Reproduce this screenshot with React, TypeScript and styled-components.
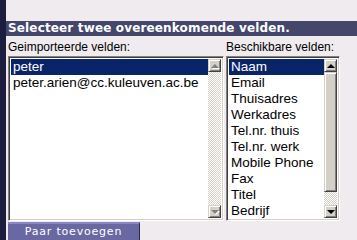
import styled, { createGlobalStyle } from "styled-components";

const GlobalStyle = createGlobalStyle`
    html, body {
        margin: 0;
        padding: 0;
        background: #efebef;
    }
`;

const imported = ["peter", "peter.arien@cc.kuleuven.ac.be"];
const available = [
    "Naam",
    "Email",
    "Thuisadres",
    "Werkadres",
    "Tel.nr. thuis",
    "Tel.nr. werk",
    "Mobile Phone",
    "Fax",
    "Titel",
    "Bedrijf",
];

export default function App() {
    return (
        <>
            <GlobalStyle />
            <Page>
                <SideStrip />
                <Content>
                    <Header>Selecteer twee overeenkomende velden.</Header>
                    <Columns>
                        <Column>
                            <Label>Geimporteerde velden:</Label>
                            <ListBox $width={216}>
                                <Items>
                                    {imported.map((item, i) => (
                                        <Item key={item} $selected={i === 0}>{item}</Item>
                                    ))}
                                </Items>
                                <ScrollBar>
                                    <ArrowButton>
                                        <Arrow $up $disabled />
                                    </ArrowButton>
                                    <Track />
                                    <ArrowButton>
                                        <Arrow $disabled />
                                    </ArrowButton>
                                </ScrollBar>
                            </ListBox>
                        </Column>
                        <Column>
                            <Label>Beschikbare velden:</Label>
                            <ListBox $width={114}>
                                <Items>
                                    {available.map((item, i) => (
                                        <Item key={item} $selected={i === 0}>{item}</Item>
                                    ))}
                                </Items>
                                <ScrollBar>
                                    <ArrowButton>
                                        <Arrow $up />
                                    </ArrowButton>
                                    <Thumb />
                                    <Track />
                                    <ArrowButton>
                                        <Arrow />
                                    </ArrowButton>
                                </ScrollBar>
                            </ListBox>
                        </Column>
                    </Columns>
                    <AddButton>Paar toevoegen</AddButton>
                </Content>
            </Page>
        </>
    );
}

const Page = styled.div`
    display: flex;
    width: 357px;
    height: 240px;
    overflow: hidden;
`;

const SideStrip = styled.div`
    width: 6px;
    flex-shrink: 0;
    background: #1d1d3d;
`;

const Content = styled.div`
    flex: 1;
    padding-top: 21px;
    display: flex;
    flex-direction: column;
`;

const Header = styled.div`
    height: 15px;
    line-height: 15px;
    background: #44466a;
    color: #fff;
    font-family: "DejaVu Sans", Verdana, sans-serif;
    font-weight: bold;
    font-size: 12px;
    letter-spacing: 0.15px;
    padding-left: 2px;
    white-space: nowrap;
`;

const Columns = styled.div`
    display: flex;
    gap: 2px;
    padding-left: 2px;
    margin-top: 4px;
`;

const Column = styled.div`
    display: flex;
    flex-direction: column;
`;

const Label = styled.div`
    font-family: "Liberation Sans", Arial, sans-serif;
    font-size: 12px;
    line-height: 14px;
    color: #000;
    height: 16px;
`;

const ListBox = styled.div<{ $width: number }>`
    width: ${p => p.$width}px;
    height: 165px;
    box-sizing: border-box;
    display: flex;
    background: #fff;
    border-top: 1px solid #808080;
    border-left: 1px solid #808080;
    border-right: 1px solid #fff;
    border-bottom: 1px solid #fff;
    box-shadow: inset 1px 1px 0 #404040, inset -1px -1px 0 #d4d0c8;
    padding: 2px;
`;

const Items = styled.div`
    flex: 1;
    min-width: 0;
    overflow: hidden;
`;

const Item = styled.div<{ $selected?: boolean }>`
    height: 16px;
    line-height: 16px;
    padding-left: 2px;
    font-family: "Liberation Sans", Arial, sans-serif;
    font-size: 13.5px;
    white-space: nowrap;
    color: ${p => (p.$selected ? "#fff" : "#000")};
    background: ${p => (p.$selected ? "#0a246a" : "transparent")};
`;

const ScrollBar = styled.div`
    width: 13px;
    flex-shrink: 0;
    display: flex;
    flex-direction: column;
`;

const ArrowButton = styled.div`
    height: 13px;
    flex-shrink: 0;
    box-sizing: border-box;
    background: #d4d0c8;
    border-top: 1px solid #d4d0c8;
    border-left: 1px solid #d4d0c8;
    border-right: 1px solid #404040;
    border-bottom: 1px solid #404040;
    box-shadow: inset 1px 1px 0 #fff, inset -1px -1px 0 #808080;
    display: flex;
    align-items: center;
    justify-content: center;
`;

const Arrow = styled.div<{ $up?: boolean; $disabled?: boolean }>`
    width: 0;
    height: 0;
    border-left: 4px solid transparent;
    border-right: 4px solid transparent;
    ${p => (p.$up ? "border-bottom" : "border-top")}: 4px solid ${p => (p.$disabled ? "#808080" : "#000")};
    filter: ${p => (p.$disabled ? "drop-shadow(1px 1px 0 #fff)" : "none")};
`;

const Track = styled.div`
    flex: 1;
    background: repeating-conic-gradient(#d4d0c8 0 25%, #fff 0 50%) 0 0 / 2px 2px;
`;

const Thumb = styled(ArrowButton)`
    height: 120px;
`;

const AddButton = styled.div`
    margin-top: 1px;
    margin-left: 2px;
    width: 132px;
    height: 18px;
    box-sizing: border-box;
    background: #6a68a2;
    border-top: 2px solid #8a88c0;
    border-right: 1px solid #2a2a4a;
    color: #fff;
    font-family: "DejaVu Sans", Verdana, sans-serif;
    font-size: 11px;
    letter-spacing: 0.8px;
    text-align: center;
    line-height: 16px;
`;
